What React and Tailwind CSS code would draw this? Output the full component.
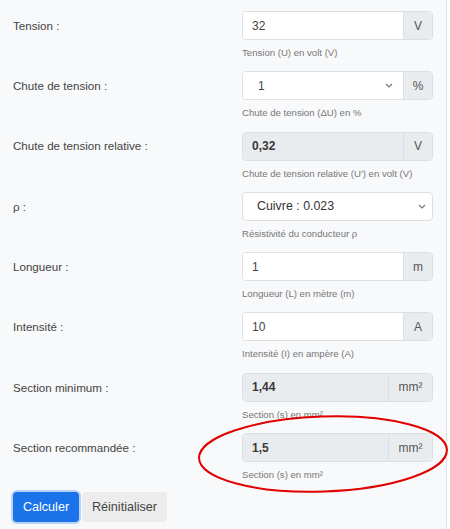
import React from 'react'

const font = { fontFamily: '"Liberation Sans", Arial, sans-serif' }

const rows = [
  { label: 'Tension :', value: '32', unit: 'V', help: 'Tension (U) en volt (V)' },
  { label: 'Chute de tension :', value: '1', unit: '%', help: 'Chute de tension (ΔU) en %', select: true },
  { label: 'Chute de tension relative :', value: '0,32', unit: 'V', help: "Chute de tension relative (U') en volt (V)", readOnly: true },
  { label: 'ρ :', value: 'Cuivre : 0.023', help: 'Résistivité du conducteur ρ', fullSelect: true },
  { label: 'Longueur :', value: '1', unit: 'm', help: 'Longueur (L) en mètre (m)' },
  { label: 'Intensité :', value: '10', unit: 'A', help: 'Intensité (I) en ampère (A)' },
  { label: 'Section minimum :', value: '1,44', unit: 'mm²', help: 'Section (s) en mm²', readOnly: true },
  { label: 'Section recommandée :', value: '1,5', unit: 'mm²', help: 'Section (s) en mm²', readOnly: true },
]

function Chevron() {
  return (
    <svg width="8" height="5" viewBox="0 0 8 5" className="shrink-0">
      <path d="M1 1l3 3 3-3" fill="none" stroke="#6b7280" strokeWidth="1.1" />
    </svg>
  )
}

function Field({ row }) {
  if (row.fullSelect) {
    return (
      <div className="h-[29px] flex items-center bg-white border border-[#dcdfe3] rounded-[4px] pl-[14px] pr-[6px] text-[12.4px] text-[#333]">
        <span className="flex-1">{row.value}</span>
        <Chevron />
      </div>
    )
  }
  return (
    <div className="h-[29px] flex border border-[#dcdfe3] rounded-[4px] overflow-hidden">
      <div
        className={`flex-1 flex items-center text-[12px] ${
          row.readOnly ? 'bg-[#e9ecef] font-bold text-[#3a3a3a] pl-[9px]' : 'bg-white text-[#444]'
        } ${row.select ? 'pl-[15px] pr-[10px]' : row.readOnly ? '' : 'pl-[9px]'}`}
      >
        <span className="flex-1">{row.value}</span>
        {row.select && <Chevron />}
      </div>
      <div
        className={`flex items-center justify-center bg-[#e9ecef] border-l border-[#dcdfe3] text-[12px] text-[#555] ${
          row.unit === 'mm²' ? 'w-[44px]' : 'w-[29px]'
        }`}
      >
        {row.unit}
      </div>
    </div>
  )
}

export default function App() {
  return (
    <div className="relative w-[450px] h-[529px] bg-white overflow-hidden" style={font}>
      <div className="w-[447px] h-full bg-[#f8f9fa] border-r border-[#dcdfe3] pt-[11px] pl-[13px]">
        {rows.map(row => (
          <div key={row.label} className="flex h-[60.3px]">
            <div className="w-[229px] h-[29px] flex items-center text-[11.6px] text-[#444]">{row.label}</div>
            <div className="w-[191px]">
              <Field row={row} />
              <p className="mt-[6px] text-[9.6px] leading-[13px] text-[#777]">{row.help}</p>
            </div>
          </div>
        ))}

        <div className="flex gap-[3px] mt-[-1px]">
          <button className="h-[30px] w-[66px] rounded-[4px] bg-[#1a73e8] text-white text-[12.6px] ring-2 ring-[#b9d3f7]">
            Calculer
          </button>
          <button className="h-[30px] w-[85px] rounded-[4px] bg-[#ececec] text-[#444] text-[12.6px]">
            Réinitialiser
          </button>
        </div>
      </div>

      {/* annotation */}
      <svg className="absolute left-0 top-0 pointer-events-none" width="450" height="529">
        <ellipse cx="323" cy="454" rx="124" ry="37.5" fill="none" stroke="#e00000" strokeWidth="2" transform="rotate(-2 323 454)" />
      </svg>
    </div>
  )
}
